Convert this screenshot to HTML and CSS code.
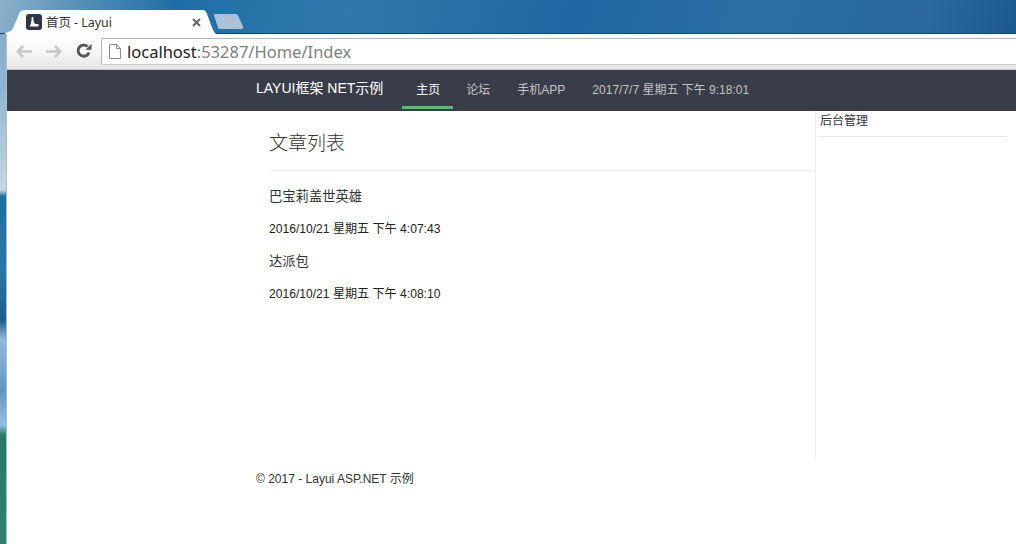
FILE: index.html
```html
<!DOCTYPE html>
<html lang="zh-CN">
<head>
  <meta charset="UTF-8" />
  <title>首页 - Layui</title>
  <link rel="stylesheet" href="styles.css">
</head>
<body>
  <!-- 桌面壁纸露出的左边条 -->
  <div class="wall"></div>

  <div class="window">
    <!-- 标签栏 -->
    <div class="titlebar">
      <div class="tab">
        <svg class="tab-shape" width="211" height="24" viewBox="0 0 211 24">
          <path d="M0 24 L0 23 C4 22 7 21 8 18 L14 4 C15 1 17 0 21 0 L198 0 C200 0 201 1 202 4 L208 20 C209 22 210 23 211 24 Z" fill="#fff"/>
        </svg>
        <svg class="favicon" width="16" height="16" viewBox="0 0 16 16">
          <rect width="16" height="16" rx="3" fill="#2f3542"/>
          <path d="M3.5 12.5 C5 11 5.5 7 5.7 3 L7.2 3 C7.4 7 8 9.5 9.5 10 L12.5 10 L12.5 12.5 Z" fill="#fff"/>
        </svg>
        <span class="tab-title">首页 - Layui</span>
        <svg class="tab-close" width="9" height="9" viewBox="0 0 9 9">
          <path d="M1 1 L8 8 M8 1 L1 8" stroke="#666" stroke-width="2"/>
        </svg>
      </div>
      <svg class="new-tab" width="31" height="15" viewBox="0 0 31 15">
        <path d="M1 1.5 C1 .5 1.5 0 2.5 0 L23 0 C24 0 24.5 .5 25 1.5 L30 12.5 C30.5 14 30 15 28.5 15 L7 15 C6 15 5.5 14.5 5 13.5 Z" fill="#a9c2d8"/>
      </svg>
    </div>

    <!-- 地址栏 -->
    <div class="toolbar">
      <svg class="tool-icon" width="16" height="13" viewBox="0 0 16 13">
        <path d="M7 1 L1.8 6.5 L7 12 M2.5 6.5 L16 6.5" fill="none" stroke="#c9c9c9" stroke-width="2.6"/>
      </svg>
      <svg class="tool-icon" width="16" height="13" viewBox="0 0 16 13">
        <path d="M9 1 L14.2 6.5 L9 12 M13.5 6.5 L0 6.5" fill="none" stroke="#c9c9c9" stroke-width="2.6"/>
      </svg>
      <svg class="tool-icon" width="16" height="16" viewBox="0 0 16 16">
        <path d="M13 9.5 A5.6 5.6 0 1 1 11.6 3.6" fill="none" stroke="#555" stroke-width="2.8"/>
        <path d="M9.5 6.8 L15.5 6.8 L15.5 0.8 Z" fill="#555"/>
      </svg>
      <div class="omnibox">
        <svg class="page-icon" width="12" height="15" viewBox="0 0 12 15">
          <path d="M.5 .5 L7.5 .5 L11.5 4.5 L11.5 14.5 L.5 14.5 Z M7.5 .5 L7.5 4.5 L11.5 4.5" fill="#fff" stroke="#8c8c8c"/>
        </svg>
        <span class="url">localhost<span class="url-path">:53287/Home/Index</span></span>
      </div>
    </div>

    <!-- 页面导航 -->
    <nav class="nav">
      <a class="brand">LAYUI框架 NET示例</a>
      <a class="nav-item active">主页</a>
      <a class="nav-item">论坛</a>
      <a class="nav-item">手机APP</a>
      <a class="nav-item">2017/7/7 星期五 下午 9:18:01</a>
    </nav>

    <!-- 内容区 -->
    <div class="body-content">
      <div class="articles">
        <h2 class="articles-title">文章列表</h2>
        <p class="article-line">巴宝莉盖世英雄</p>
        <p class="article-line article-date">2016/10/21 星期五 下午 4:07:43</p>
        <p class="article-line">达派包</p>
        <p class="article-line article-date">2016/10/21 星期五 下午 4:08:10</p>
      </div>
      <aside class="side">
        <div class="side-title">后台管理</div>
      </aside>
    </div>

    <footer class="footer">© 2017 - Layui ASP.NET 示例</footer>
  </div>
</body>
</html>
```

FILE: styles.css
```css
* {
  margin: 0;
  padding: 0;
  box-sizing: border-box;
}

body {
  display: flex;
  height: 544px;
  overflow: hidden;
  font-family: "Liberation Sans", "Noto Sans CJK SC", sans-serif;
  background: #fff;
}

/* 壁纸左边条 */
.wall {
  width: 7px;
  flex: none;
  border-right: 1px solid #b5bcc2;
  background: linear-gradient(to bottom,
    #7fa9c8 0, #8fb5d2 90px, #c8d8e0 190px, #1e6fa3 196px, #2877a8 270px,
    #1a5f8c 320px, #90bbe0 340px, #5f97c4 390px, #94c0e6 425px,
    #2a7a6a 435px, #2f7f6c 544px);
}

.window {
  flex: 1;
  min-width: 0;
  display: flex;
  flex-direction: column;
}

/* 标签栏 */
.titlebar {
  height: 34px;
  flex: none;
  display: flex;
  align-items: flex-end;
  margin-left: -7px;
  padding-left: 5px;
  border-bottom: 1px solid #14466b;
  background:
    linear-gradient(105deg, #8db1ca 0, #5f97bb 60px, #1f6ea5 170px, #3079ac 340px, #1e66a2 560px, #2b6ea6 720px, #2a689f 900px, #17548f 1016px);
}

.tab {
  position: relative;
  width: 211px;
  height: 24px;
  margin-bottom: -1px;
  display: flex;
  align-items: center;
  padding: 0 15px 0 21px;
  font-size: 12.4px;
  color: #333;
}

.tab-shape {
  position: absolute;
  left: 0;
  top: 0;
}

.favicon,
.tab-title,
.tab-close {
  position: relative;
}

.favicon {
  flex: none;
}

.tab-title {
  flex: 1;
  margin-left: 4px;
  font-family: "Noto Sans", "Noto Sans CJK SC", sans-serif;
}

.new-tab {
  flex: none;
  margin: 0 0 4px -3px;
}

/* 地址栏 */
.toolbar {
  height: 36px;
  flex: none;
  display: flex;
  align-items: center;
  gap: 14px;
  padding: 0 0 1px 9px;
  background: linear-gradient(to bottom, #fff 0, #f4f4f4 60%, #e4e4e4 100%);
  border-bottom: 1px solid #c8c8c8;
}

.tool-icon {
  flex: none;
}

.omnibox {
  flex: 1;
  height: 27px;
  margin-left: -5px;
  display: flex;
  align-items: center;
  gap: 6px;
  padding-left: 7px;
  background: #fff;
  border: 1px solid #b4b4b4;
  border-bottom-color: #ccc;
  border-right: 0;
  border-radius: 2px 0 0 2px;
}

.url {
  font-family: "Noto Sans", sans-serif;
  font-size: 16.5px;
  color: #222;
}

.url-path {
  color: #808080;
}

/* 页面导航 */
.nav {
  height: 41px;
  flex: none;
  display: flex;
  align-items: flex-start;
  padding-left: 249px;
  background: #393d49;
  font-size: 12px;
  line-height: 36px;
}

.brand {
  color: #fff;
  font-size: 14px;
  line-height: 37px;
  margin-right: 6px;
  padding-right: 13px;
}

.nav-item {
  height: 39px;
  padding: 2px 14px 0 13px;
  color: #c2c2c2;
  border-bottom: 3px solid transparent;
}

.nav-item.active {
  padding: 2px 13px 0 14px;
  color: #fff;
  border-bottom-color: #5fb878;
}

/* 内容区 */
.body-content {
  height: 347px;
  flex: none;
  display: flex;
  padding-left: 249px;
}

.articles {
  width: 559px;
  padding: 0 0 0 13px;
  color: #333;
}

.articles-title {
  height: 60px;
  font-size: 19px;
  font-weight: 300;
  line-height: 66px;
  color: #333;
  border-bottom: 1px solid #eee;
  margin-bottom: 10px;
}

.article-line {
  height: 32.3px;
  line-height: 32.5px;
  font-size: 13.3px;
}

.article-date {
  font-size: 12.1px;
  color: #222;
}

.side {
  flex: 1;
  border-left: 1px solid #eee;
  padding: 0 10px 0 3px;
}

.side-title {
  height: 26px;
  line-height: 20px;
  padding-left: 1px;
  font-size: 12px;
  color: #333;
  border-bottom: 1px solid #e4e4e4;
}

.footer {
  padding: 13px 0 0 249px;
  font-size: 12px;
  line-height: 16px;
  color: #333;
}
```
